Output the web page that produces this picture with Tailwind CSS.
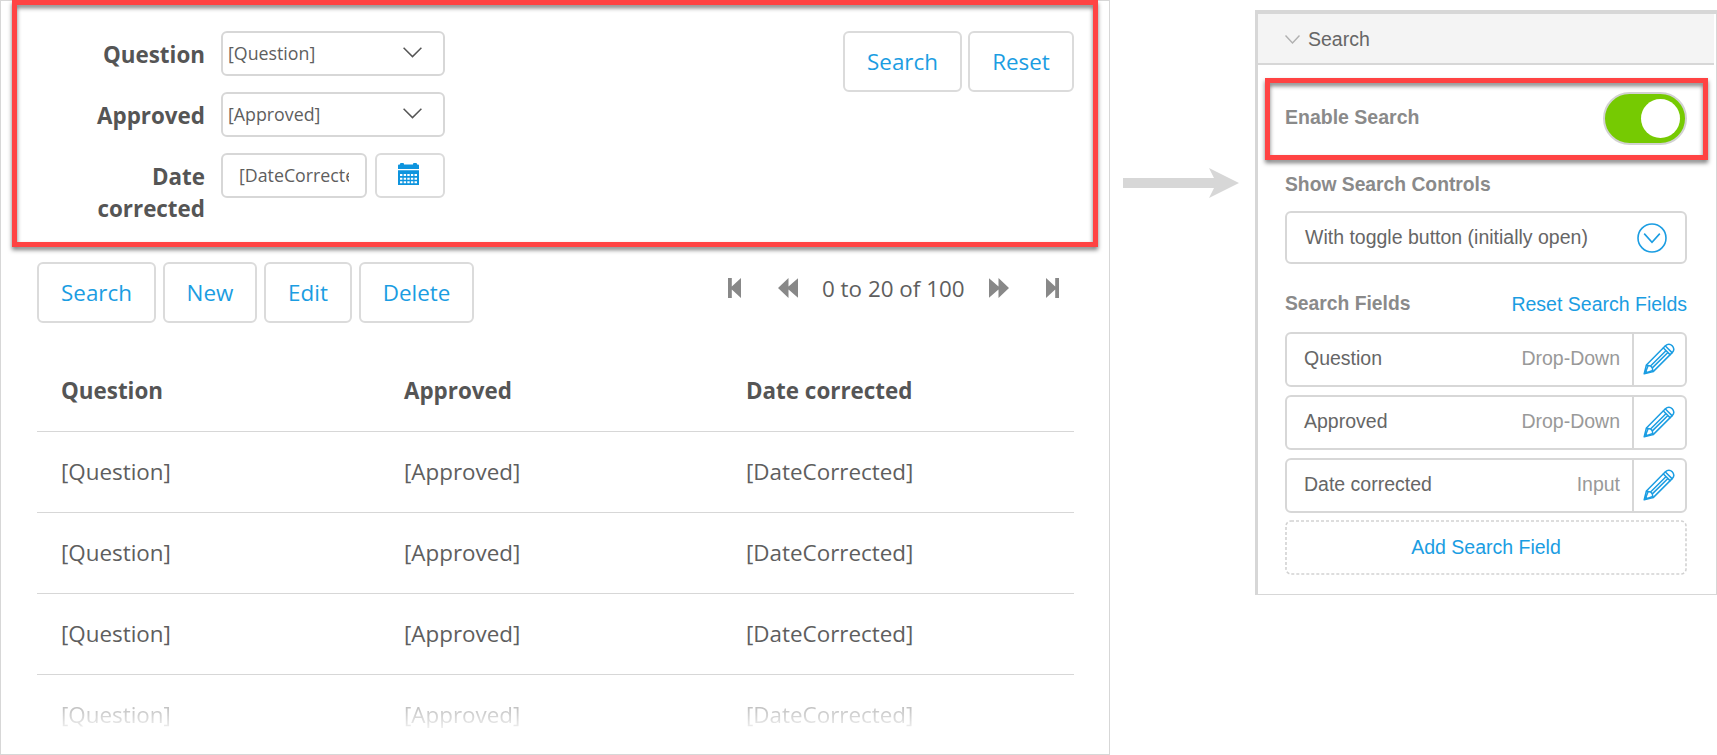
<!DOCTYPE html>
<html lang="en">
<head>
<meta charset="utf-8">
<title>Search bar configuration</title>
<script src="https://cdn.jsdelivr.net/npm/@tailwindcss/browser@4"></script>
</head>
<body class="bg-white overflow-hidden">
<svg class="hidden">
  <symbol id="pencil" viewBox="0 0 32 32">
    <g fill="none" stroke="#1b9de2" stroke-width="1.5" stroke-linejoin="round" stroke-linecap="round">
      <path d="M1.200 30.800 3.400 22 22.400 2.800C24.600.600 27.200.600 29.200 2.800S31.400 7.400 29.200 9.600L10.200 28.600Z"/>
      <path d="M3.600 22.200 7.600 23 9.200 24.600 10 28.400M5 23 3.200 27.400M9.800 27.400 5 29.200M20.400 5 27 11.600M22.400 3 29 9.600M7.800 22.800 22.400 8.200M9.600 24.600 24.400 10"/>
    </g>
    <path d="M1 31 2.200 26.600 5.600 29.800Z" fill="#1b9de2"/>
  </symbol>
</svg>
<div class="flex w-[1717px] h-[755px] items-start">

  <!-- Data grid with search bar -->
  <section class="relative flex-none w-[1110px] h-[755px] border border-[#d7d7d7] pl-9 pr-[35px] pt-[30px] font-['Open_Sans',sans-serif] text-[22.4px] leading-8 text-[#5e5e5e]">
    <div class="flex justify-between items-start h-[231px]">
      <div class="flex flex-col gap-4">
        <div class="flex h-[45px]">
          <div class="w-[168px] pt-2 mr-4 text-right font-bold text-[#555]">Question</div>
          <div class="flex items-center justify-between w-[224px] h-[45px] border-2 border-[#d7d7d7] rounded-md pl-[5px] pr-[21px] text-[17.8px] leading-6">
            <span class="-mt-0.5">[Question]</span>
            <svg class="w-[19px] h-[11px] -mt-0.5" viewBox="0 0 19 11"><path d="M.6.8 9.5 9.6 18.4.8" fill="none" stroke="#555" stroke-width="1.5"/></svg>
          </div>
        </div>
        <div class="flex h-[45px]">
          <div class="w-[168px] pt-2 mr-4 text-right font-bold text-[#555]">Approved</div>
          <div class="flex items-center justify-between w-[224px] h-[45px] border-2 border-[#d7d7d7] rounded-md pl-[5px] pr-[21px] text-[17.8px] leading-6">
            <span class="-mt-0.5">[Approved]</span>
            <svg class="w-[19px] h-[11px] -mt-0.5" viewBox="0 0 19 11"><path d="M.6.8 9.5 9.6 18.4.8" fill="none" stroke="#555" stroke-width="1.5"/></svg>
          </div>
        </div>
        <div class="flex items-start">
          <div class="w-[168px] pt-2 mr-4 text-right font-bold text-[#555]">Date<br>corrected</div>
          <div class="flex items-center w-[146px] h-[45px] border-2 border-[#d7d7d7] rounded-md px-4 text-[17.8px] leading-6">
            <span class="-mt-0.5 overflow-hidden whitespace-nowrap w-[110px]">[DateCorrected]</span>
          </div>
          <div class="flex justify-center w-[70px] h-[45px] ml-2 pt-2 border-2 border-[#dbdbdb] rounded-md">
            <svg class="w-[21px] h-[22px] -ml-1" viewBox="0 0 21 22" fill="#0e94de">
              <path d="M0 2.5Q0 1.5 1 1.5H2V1Q2 0 3 0H5Q6 0 6 1V1.500H15V1Q15 0 16 0H18Q19 0 19 1V1.500H20Q21 1.500 21 2.500V6H0Z"/>
              <path fill-rule="evenodd" d="M0 7.300H21V22H0ZM2 11V13H4.400V11ZM5.700 11V13H8.100V11ZM9.300 11V13H11.700V11ZM12.900 11V13H15.300V11ZM16.500 11V13H19V11ZM2 14.700V16.700H4.400V14.700ZM5.700 14.700V16.700H8.100V14.700ZM9.300 14.700V16.700H11.700V14.700ZM12.900 14.700V16.700H15.300V14.700ZM16.500 14.700V16.700H19V14.700ZM2 18.300V20.200H4.400V18.300ZM5.700 18.300V20.200H8.100V18.300ZM9.300 18.300V20.200H11.700V18.300ZM12.900 18.300V20.200H15.300V18.300ZM16.500 18.300V20.200H19V18.300Z"/>
            </svg>
          </div>
        </div>
      </div>
      <div class="flex gap-1.5 text-[#1b9de2]">
        <div class="flex items-center justify-center w-[119px] h-[61px] border-2 border-[#dbdbdb] rounded-md">Search</div>
        <div class="flex items-center justify-center w-[106px] h-[61px] border-2 border-[#dbdbdb] rounded-md">Reset</div>
      </div>
    </div>

    <div class="flex items-start">
      <div class="flex text-[#1b9de2]">
        <div class="flex items-center justify-center w-[119px] h-[61px] mr-[7px] border-2 border-[#dbdbdb] rounded-md">Search</div>
        <div class="flex items-center justify-center w-[94px] h-[61px] mr-[7px] border-2 border-[#dbdbdb] rounded-md">New</div>
        <div class="flex items-center justify-center w-[88px] h-[61px] mr-[7px] border-2 border-[#dbdbdb] rounded-md">Edit</div>
        <div class="flex items-center justify-center w-[115px] h-[61px] border-2 border-[#dbdbdb] rounded-md">Delete</div>
      </div>
      <div class="flex items-center ml-[254px] pt-[11px]">
        <svg class="flex-none w-[13px] h-5 -mt-[3px]" viewBox="0 0 13 20" fill="#888"><path d="M0 0H3.800V8.500L13 0V20L3.800 11.500V20H0Z"/></svg>
        <svg class="flex-none w-5 h-5 ml-[37px] -mt-[3px]" viewBox="0 0 20 20" fill="#888"><path d="M0 10 10.500 0V8.500L20 .3V19.700L10.500 11.500V20Z"/></svg>
        <span class="flex-none w-[144px] ml-6 whitespace-nowrap">0 to 20 of 100</span>
        <svg class="flex-none w-5 h-5 ml-[23px] -mt-[3px]" viewBox="0 0 20 20" fill="#888"><path d="M20 10 9.500 0V8.500L0 .3V19.700L9.500 11.500V20Z"/></svg>
        <svg class="flex-none w-[13px] h-5 ml-[37px] -mt-[3px]" viewBox="0 0 13 20" fill="#888"><path d="M13 0H9.200V8.500L0 0V20L9.200 11.500V20H13Z"/></svg>
      </div>
    </div>

    <div class="mt-[27px]">
      <div class="grid grid-cols-[343px_342px_1fr] pl-6 pt-[25px] h-[82px] border-b border-[#d7d7d7] font-bold text-[#555]"><div>Question</div><div>Approved</div><div>Date corrected</div></div>
      <div class="grid grid-cols-[343px_342px_1fr] pl-6 py-6 h-[81px] border-b border-[#d7d7d7]"><div>[Question]</div><div>[Approved]</div><div>[DateCorrected]</div></div>
      <div class="grid grid-cols-[343px_342px_1fr] pl-6 py-6 h-[81px] border-b border-[#d7d7d7]"><div>[Question]</div><div>[Approved]</div><div>[DateCorrected]</div></div>
      <div class="grid grid-cols-[343px_342px_1fr] pl-6 py-6 h-[81px] border-b border-[#d7d7d7]"><div>[Question]</div><div>[Approved]</div><div>[DateCorrected]</div></div>
      <div class="grid grid-cols-[343px_342px_1fr] pl-6 pt-6 h-[70px] [mask-image:linear-gradient(to_bottom,rgba(0,0,0,0.8)_0px,transparent_61px)]"><div>[Question]</div><div>[Approved]</div><div>[DateCorrected]</div></div>
    </div>

    <!-- Highlight frame -->
    <div class="absolute left-[11px] -top-px w-[1086px] h-[247px] border-5 border-[#ff4343] [filter:drop-shadow(0px_3px_2px_rgba(0,0,0,0.5))]"></div>
  </section>

  <!-- Connector arrow -->
  <svg class="flex-none w-[116px] h-[30px] ml-[13px] mt-[168px]" viewBox="0 0 116 30" fill="#d7d7d7"><path d="M0 10H91L86 0 116 15 86 30 91 20H0Z"/></svg>

  <!-- Property panel -->
  <section class="relative flex-none w-[462px] h-[585px] ml-4 mt-[10px] border-l-3 border-t-4 border-b border-r border-[#d7d7d7] font-['Liberation_Sans',Arial,sans-serif] text-[19.5px] leading-6 text-[#666]">
    <div class="flex items-center h-[51px] mr-0.5 pl-[27px] bg-[#f4f4f4] border-b-2 border-[#d7d7d7]">
      <svg class="w-[15px] h-[9px] mt-0.5" viewBox="0 0 15 9"><path d="M.5.600 7.500 8 14.500.600" fill="none" stroke="#b0b0b0" stroke-width="1.400"/></svg>
      <span class="ml-2">Search</span>
    </div>
    <div class="pl-[27px] pr-[29px] pt-[27px]">
      <div class="flex justify-between h-[53px]">
        <span class="pt-[13px] font-bold text-[#8a8a8a]">Enable Search</span>
        <div class="flex items-center justify-end w-[84px] h-[53px] pr-[5px] rounded-full border-2 border-[#d2d2d2] bg-[#76ca02]">
          <div class="size-[39px] rounded-full bg-white"></div>
        </div>
      </div>
      <div class="mt-7 font-bold text-[19.3px] text-[#8a8a8a]">Show Search Controls</div>
      <div class="flex items-center justify-between h-[53px] mt-[14px] pl-[18px] pr-[18px] border-2 border-[#d7d7d7] rounded-md">
        <span class="-mt-px">With toggle button (initially open)</span>
        <svg class="size-[30px]" viewBox="0 0 30 30" fill="none" stroke="#1b9de2"><circle cx="15" cy="15" r="14" stroke-width="1.600"/><path d="M7.200 10.600 15 19.200 22.800 10.600" stroke-width="1.600"/></svg>
      </div>
      <div class="flex justify-between mt-7">
        <span class="font-bold text-[19.3px] text-[#8a8a8a]">Search Fields</span>
        <span class="text-[#1b9de2]">Reset Search Fields</span>
      </div>
      <div class="flex flex-col gap-2 mt-4">
        <div class="flex h-[55px] border-2 border-[#d7d7d7] rounded-md">
          <div class="flex flex-1 justify-between pt-3 pl-[17px] pr-3"><span>Question</span><span class="text-[#999]">Drop-Down</span></div>
          <div class="w-[53px] border-l-2 border-[#d7d7d7] pl-[9px] pt-[9px]"><svg class="size-8"><use href="#pencil"/></svg></div>
        </div>
        <div class="flex h-[55px] border-2 border-[#d7d7d7] rounded-md">
          <div class="flex flex-1 justify-between pt-3 pl-[17px] pr-3"><span>Approved</span><span class="text-[#999]">Drop-Down</span></div>
          <div class="w-[53px] border-l-2 border-[#d7d7d7] pl-[9px] pt-[9px]"><svg class="size-8"><use href="#pencil"/></svg></div>
        </div>
        <div class="flex h-[55px] border-2 border-[#d7d7d7] rounded-md">
          <div class="flex flex-1 justify-between pt-3 pl-[17px] pr-3"><span>Date corrected</span><span class="text-[#999]">Input</span></div>
          <div class="w-[53px] border-l-2 border-[#d7d7d7] pl-[9px] pt-[9px]"><svg class="size-8"><use href="#pencil"/></svg></div>
        </div>
      </div>
      <div class="relative flex items-center justify-center h-[55px] mt-[7px] text-[#1b9de2]">
        <svg class="absolute inset-0 w-full h-full"><rect x="1" y="1" width="400" height="53" rx="5" fill="none" stroke="#d2d2d2" stroke-width="1.600" stroke-dasharray="3 2"/></svg>
        <span class="-mt-0.5">Add Search Field</span>
      </div>
    </div>

    <!-- Highlight frame -->
    <div class="absolute left-[7px] top-16 w-[443px] h-[82px] border-5 border-[#ff4343] [filter:drop-shadow(0px_3px_2px_rgba(0,0,0,0.5))]"></div>
  </section>
</div>
</body>
</html>
